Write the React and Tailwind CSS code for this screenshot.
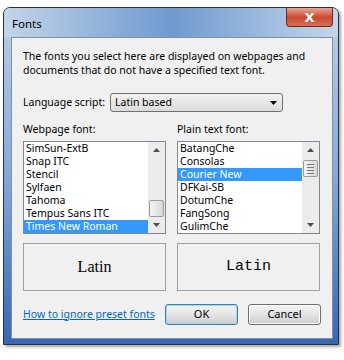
import { useState } from "react";

const ui = { fontFamily: '"Noto Sans", "Open Sans", sans-serif' };

const webFonts = ["SimSun-ExtB", "Snap ITC", "Stencil", "Sylfaen", "Tahoma", "Tempus Sans ITC", "Times New Roman"];
const plainFonts = ["BatangChe", "Consolas", "Courier New", "DFKai-SB", "DotumChe", "FangSong", "GulimChe"];

function Arrow({ up }) {
  return (
    <svg width="7" height="4" viewBox="0 0 7 4">
      <path d={up ? "M0 4 L3.5 0 L7 4 Z" : "M0 0 L7 0 L3.5 4 Z"} fill="#4d4d4d" />
    </svg>
  );
}

function ListBox({ items, selected, thumbTop, grip }) {
  return (
    <div className="flex h-[93px] w-[143px] border border-[#828790] bg-white">
      <div className="flex flex-1 flex-col">
        {items.map((f) => (
          <div
            key={f}
            className={
              "h-[13px] overflow-hidden pl-[2px] text-[10.5px] leading-[13px] " +
              (f === selected ? "bg-[#3399ff] text-white" : "text-black")
            }
          >
            {f}
          </div>
        ))}
      </div>
      <div className="relative flex w-[17px] flex-col items-center justify-between bg-[#ececec] py-[6px]">
        <Arrow up />
        <div
          className="absolute left-[1px] flex h-[17px] w-[15px] flex-col items-center justify-center gap-[2px] rounded-[2px] border border-[#9b9b9b] bg-gradient-to-r from-[#f4f4f4] to-[#d8d8d8]"
          style={{ top: thumbTop }}
        >
          {grip && (
            <>
              <div className="h-px w-[7px] bg-[#777]" />
              <div className="h-px w-[7px] bg-[#777]" />
              <div className="h-px w-[7px] bg-[#777]" />
              <div className="h-px w-[7px] bg-[#777]" />
            </>
          )}
        </div>
        <Arrow />
      </div>
    </div>
  );
}

function Button({ children, primary }) {
  return (
    <button
      className={
        "h-[21px] w-[73px] rounded-[3px] border text-[11px] text-black bg-gradient-to-b from-[#f6f6f6] via-[#e4e4e4] to-[#cdcdcd] " +
        (primary ? "border-[#3c7fb1] shadow-[inset_0_0_0_1px_#a6d4f3]" : "border-[#707070] shadow-[inset_0_0_0_1px_#fbfbfb]")
      }
      style={ui}
    >
      {children}
    </button>
  );
}

export default function App() {
  const [web] = useState("Times New Roman");
  const [plain] = useState("Courier New");

  return (
    <div className="h-[360px] w-[344px] bg-white pl-[3px] pt-[7px]" style={ui}>
      <div className="flex h-[338px] w-[336px] flex-col rounded-t-[7px] border border-[#2b2f36] bg-gradient-to-b from-[#bcd0e6] via-[#85a9d6] to-[#3667b4] shadow-[2px_2px_3px_rgba(0,0,0,0.35)]">
        <div className="relative flex h-[29px] items-start justify-between rounded-t-[6px] bg-gradient-to-r from-[#c3d5e8] via-[#6f9ad0] to-[#c3d5e8] pl-[8px]">
          <span className="mt-[9px] text-[11.5px] leading-[14px] text-black">Fonts</span>
          <div className="mr-[5px] flex h-[19px] w-[47px] items-center justify-center rounded-b-[4px] border border-t-0 border-[#6b2b22] bg-gradient-to-b from-[#e9a597] via-[#c9482f] to-[#d76d53]">
            <span className="text-[13px] font-bold leading-none text-white" style={{ fontFamily: '"DejaVu Sans", sans-serif' }}>
              X
            </span>
          </div>
        </div>

        <div className="mb-[5px] ml-[7px] mr-[5px] flex flex-1 flex-col border border-[#7f90a8] bg-[#f0f0f0] px-[11px] pt-[11px]">
          <p className="text-[10.5px] leading-[14px] text-black">
            The fonts you select here are displayed on webpages and
            <br />
            documents that do not have a specified text font.
          </p>

          <div className="mt-[16px] flex items-center">
            <span className="w-[87px] text-[10.5px] text-black">Language script:</span>
            <div className="flex h-[19px] w-[173px] items-center justify-between rounded-[3px] border border-[#707070] bg-gradient-to-b from-[#f3f3f3] to-[#dcdcdc] pl-[4px] pr-[5px]">
              <span className="text-[10.5px] text-black">Latin based</span>
              <svg width="7" height="4" viewBox="0 0 7 4">
                <path d="M0 0 L7 0 L3.5 4 Z" fill="#000" />
              </svg>
            </div>
          </div>

          <div className="mt-[10px] flex gap-[11px]">
            <div className="flex flex-col">
              <span className="h-[14px] text-[10.5px] leading-[14px] text-black">Webpage font:</span>
              <div className="mt-[5px]">
                <ListBox items={webFonts} selected={web} thumbTop={58} />
              </div>
              <div className="mt-[9px] flex h-[48px] w-[143px] items-center justify-center border border-[#a0a0a0] text-[16px] text-black" style={{ fontFamily: '"Liberation Serif", serif' }}>
                Latin
              </div>
            </div>
            <div className="flex flex-col">
              <span className="h-[14px] text-[10.5px] leading-[14px] text-black">Plain text font:</span>
              <div className="mt-[5px]">
                <ListBox items={plainFonts} selected={plain} thumbTop={18} grip />
              </div>
              <div className="mt-[9px] flex h-[48px] w-[143px] items-center justify-center border border-[#a0a0a0] text-[15px] text-black" style={{ fontFamily: '"Liberation Mono", monospace' }}>
                Latin
              </div>
            </div>
          </div>

          <div className="mt-[13px] flex items-center">
            <a href="#" className="w-[142px] text-[10.5px] text-[#0066cc] underline">
              How to ignore preset fonts
            </a>
            <div className="flex gap-[10px]">
              <Button primary>OK</Button>
              <Button>Cancel</Button>
            </div>
          </div>
        </div>
      </div>
    </div>
  );
}
